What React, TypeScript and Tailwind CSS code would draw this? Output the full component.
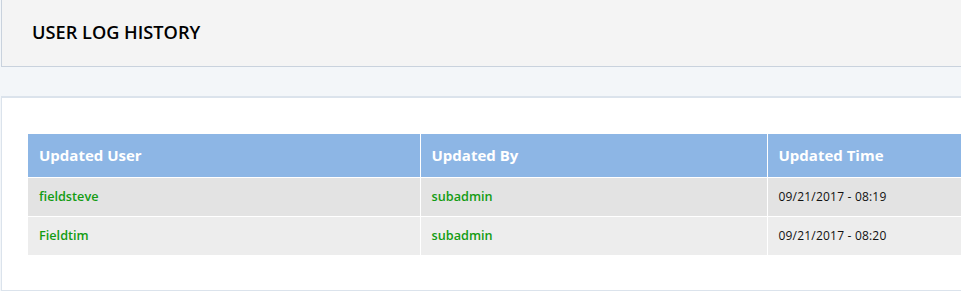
const LOGS = [
  { user: "fieldsteve", by: "subadmin", time: "09/21/2017 - 08:19" },
  { user: "Fieldtim", by: "subadmin", time: "09/21/2017 - 08:20" },
];

export default function App() {
  return (
    <div className="w-[961px] h-[291px] overflow-hidden bg-[#f3f6f9] font-['Open_Sans',sans-serif]">
      <div className="ml-px h-[67px] bg-[#f4f4f4] border-l border-b border-[#c9d2dd] flex items-center pl-[30px]">
        <h1 className="text-[18.2px] font-semibold text-black">USER LOG HISTORY</h1>
      </div>

      <div className="mt-[29px] ml-px h-[195px] bg-white border-l border-t-2 border-b border-[#dbe3ec] pt-[36px] pl-[26px]">
        <table className="w-[1000px] table-fixed border-collapse">
          <colgroup>
            <col className="w-[392px]" />
            <col className="w-[347px]" />
            <col />
          </colgroup>
          <thead>
            <tr className="h-[43px] bg-[#8db6e5]">
              {["Updated User", "Updated By", "Updated Time"].map((h) => (
                <th
                  key={h}
                  className="px-[11px] text-left text-[15px] font-bold text-white border-r border-b border-white"
                >
                  {h}
                </th>
              ))}
            </tr>
          </thead>
          <tbody>
            {LOGS.map((row, i) => (
              <tr key={row.user} className={`h-[39px] ${i % 2 === 0 ? "bg-[#e3e3e3]" : "bg-[#ededed]"}`}>
                <td className="px-[11px] text-[12.7px] font-semibold text-[#139c13] border-r border-b border-white">
                  {row.user}
                </td>
                <td className="px-[11px] text-[12.7px] font-semibold text-[#139c13] border-r border-b border-white">
                  {row.by}
                </td>
                <td className="px-[11px] text-[12px] tracking-[0.2px] text-[#111] border-b border-white">{row.time}</td>
              </tr>
            ))}
          </tbody>
        </table>
      </div>
    </div>
  );
}
